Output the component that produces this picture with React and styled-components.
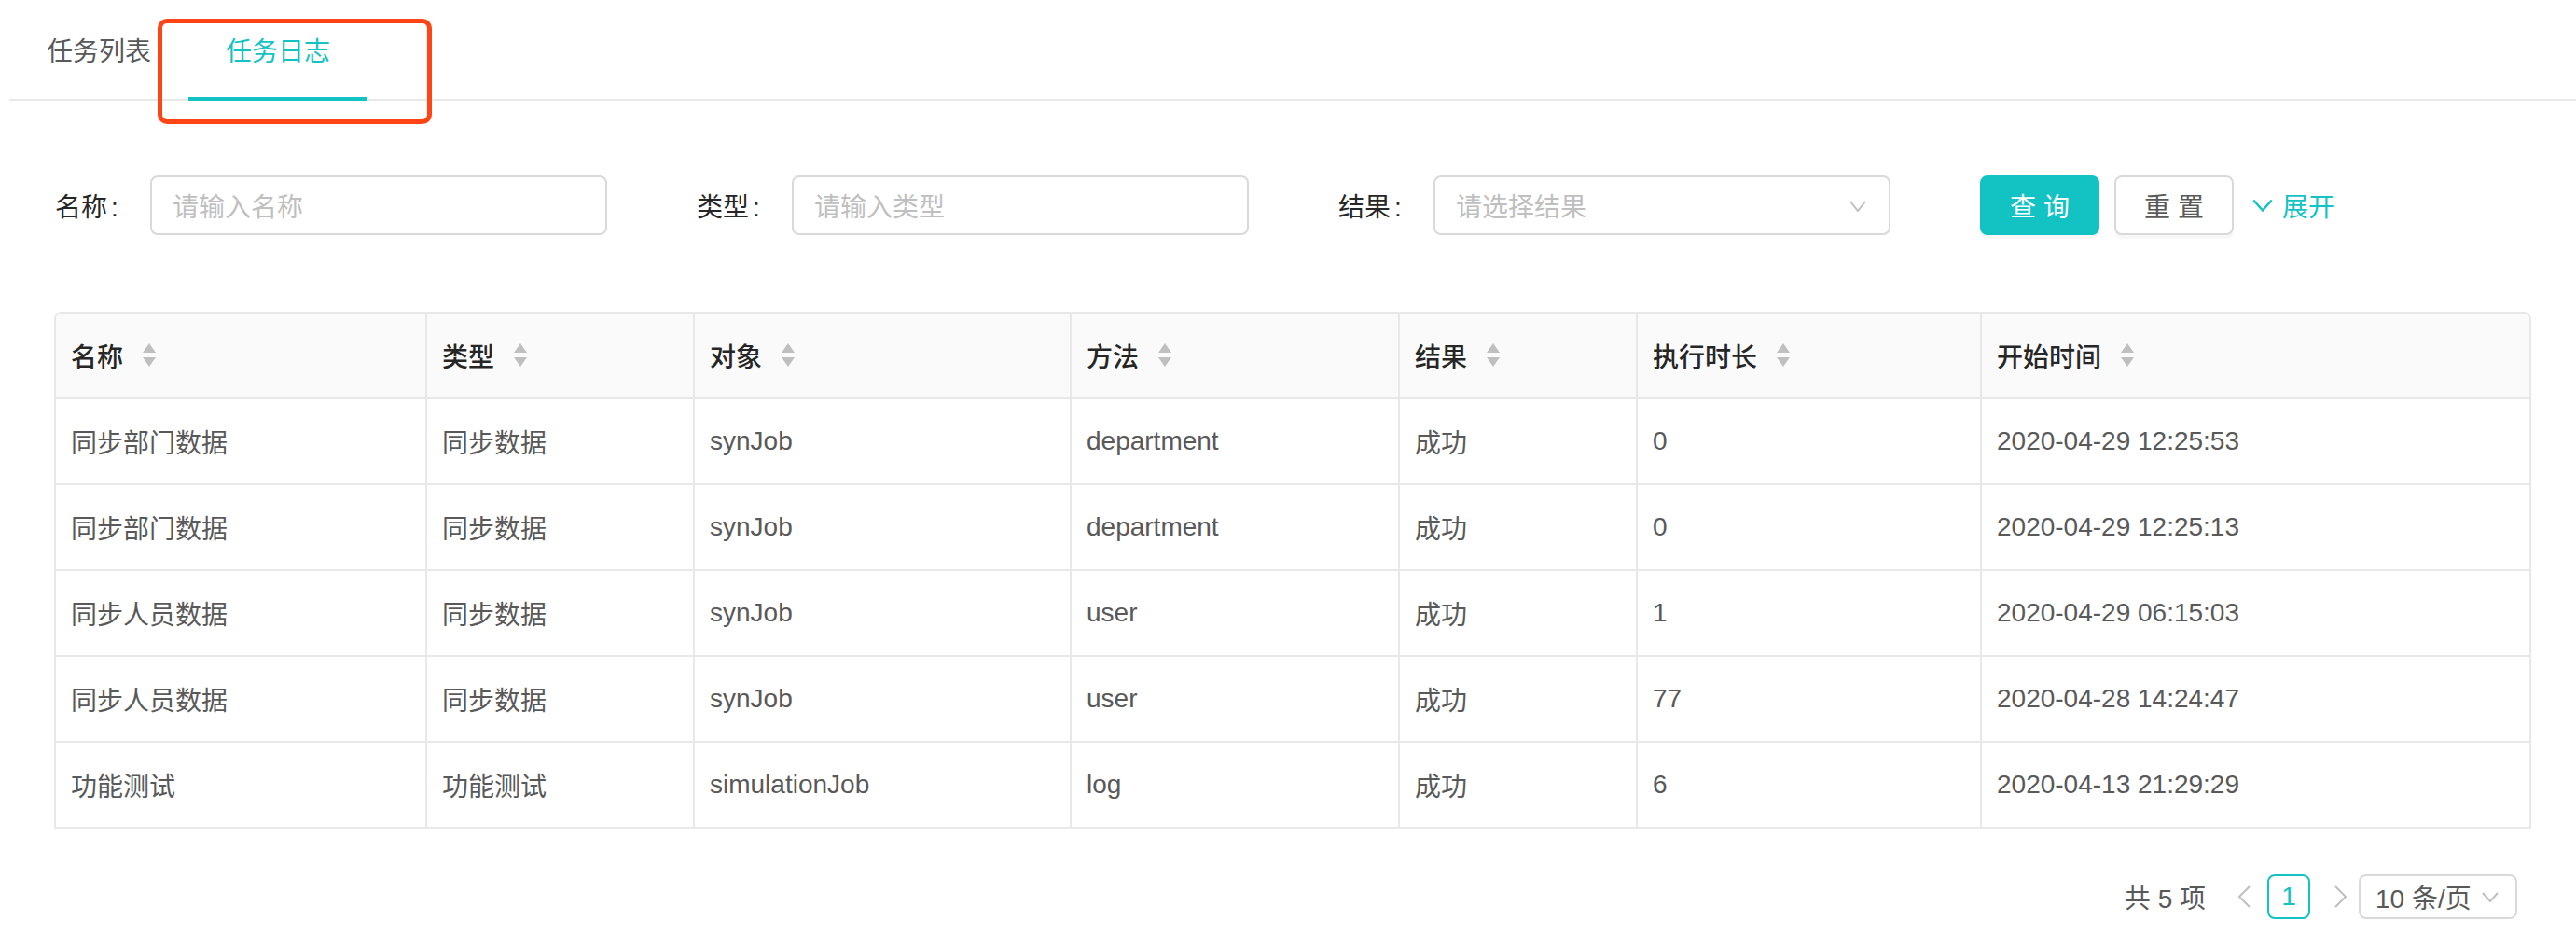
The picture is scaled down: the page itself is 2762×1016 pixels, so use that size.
import React from 'react'
import styled, { createGlobalStyle } from 'styled-components'

const teal = '#13c2c2'
const line = '#e8e8e8'

const GlobalStyle = createGlobalStyle`
  html, body {
    margin: 0;
    padding: 0;
    background: #fff;
  }
  body {
    font-family: 'Liberation Sans', 'Noto Sans CJK SC', sans-serif;
    font-size: 28px;
    color: #595959;
  }
`

const Page = styled.div`
  position: relative;
  width: 2762px;
  min-height: 1016px;
`

// annotation drawn over the active tab
const Highlight = styled.div`
  position: absolute;
  left: 169px;
  top: 20px;
  width: 294px;
  height: 113px;
  box-sizing: border-box;
  border: 5px solid #ff4516;
  border-radius: 10px;
  pointer-events: none;
`

const TabNav = styled.div`
  display: flex;
  margin-left: 10px;
  border-bottom: 2px solid ${line};
`

const Tab = styled.div`
  padding: 35px 40px 27px;
  line-height: 42px;
  margin-bottom: -2px;
  border-bottom: 4px solid ${props => (props.active ? teal : 'transparent')};
  color: ${props => (props.active ? teal : '#595959')};
  cursor: pointer;
`

const Body = styled.div`
  padding: 0 48px 0 58px;
`

const FilterRow = styled.div`
  display: flex;
  align-items: center;
  margin-top: 80px;
  padding-left: 1px;
`

const FilterItem = styled.div`
  display: flex;
  align-items: center;
  width: 688px;
  flex: none;
`

const Label = styled.label`
  width: 102px;
  flex: none;
  color: #262626;
  white-space: nowrap;
`

const Colon = styled.span`
  margin: 0 4px;
`

const Field = styled.div`
  position: relative;
  width: 490px;
  height: 64px;
  box-sizing: border-box;
  border: 2px solid #d9d9d9;
  border-radius: 8px;
  display: flex;
  align-items: center;
  padding: 0 22px;
  color: #bfbfbf;
`

const Caret = styled.svg`
  position: absolute;
  right: 24px;
  top: 25px;
`

const Button = styled.button`
  width: 128px;
  height: 64px;
  margin-right: 16px;
  border-radius: 8px;
  font: inherit;
  letter-spacing: 8px;
  text-indent: 8px;
  cursor: pointer;
  box-shadow: 0 4px 0 rgba(0, 0, 0, 0.03);
  border: 2px solid ${props => (props.primary ? teal : '#d9d9d9')};
  background: ${props => (props.primary ? teal : '#fff')};
  color: ${props => (props.primary ? '#fff' : '#595959')};
`

const Expand = styled.a`
  display: flex;
  align-items: center;
  gap: 10px;
  color: ${teal};
  margin-left: 4px;
`

const Table = styled.div`
  margin-top: 82px;
  border: 2px solid ${line};
  border-bottom: none;
  border-radius: 8px 8px 0 0;
  overflow: hidden;
`

const Row = styled.div`
  display: grid;
  grid-template-columns: 398px 287px 404px 352px 255px 369px 587px;
  background: ${props => (props.head ? '#fafafa' : '#fff')};
  border-bottom: 2px solid ${line};
`

const Cell = styled.div`
  display: flex;
  align-items: center;
  height: 90px;
  padding: 0 16px;
  border-right: 2px solid ${line};
  white-space: nowrap;
  color: ${props => (props.head ? '#262626' : '#595959')};
  font-weight: ${props => (props.head ? 500 : 400)};

  &:last-child {
    border-right: none;
  }
`

const SortIcon = styled.svg`
  margin-left: 20px;
  flex: none;
`

const Pagination = styled.div`
  display: flex;
  align-items: center;
  justify-content: flex-end;
  margin-top: 49px;
  margin-right: 15px;
`

const Total = styled.span`
  color: #595959;
`

const Arrow = styled.svg`
  flex: none;
  margin-left: ${props => props.gap}px;
`

const PageItem = styled.div`
  width: 46px;
  height: 48px;
  box-sizing: border-box;
  margin-left: 18px;
  border: 2px solid ${teal};
  border-radius: 8px;
  color: ${teal};
  display: flex;
  align-items: center;
  justify-content: center;
`

const SizeSelect = styled.div`
  width: 170px;
  height: 48px;
  box-sizing: border-box;
  margin-left: 12px;
  border: 2px solid #d9d9d9;
  border-radius: 8px;
  display: flex;
  align-items: center;
  justify-content: space-between;
  padding: 0 18px 0 16px;
  color: #595959;
`

const columns = ['名称', '类型', '对象', '方法', '结果', '执行时长', '开始时间']

const rows = [
  ['同步部门数据', '同步数据', 'synJob', 'department', '成功', '0', '2020-04-29 12:25:53'],
  ['同步部门数据', '同步数据', 'synJob', 'department', '成功', '0', '2020-04-29 12:25:13'],
  ['同步人员数据', '同步数据', 'synJob', 'user', '成功', '1', '2020-04-29 06:15:03'],
  ['同步人员数据', '同步数据', 'synJob', 'user', '成功', '77', '2020-04-28 14:24:47'],
  ['功能测试', '功能测试', 'simulationJob', 'log', '成功', '6', '2020-04-13 21:29:29'],
]

const Sorter = () => (
  <SortIcon width="16" height="26" viewBox="0 0 16 26">
    <path d="M8 0 L15 10 L1 10 Z" fill="#bfbfbf" />
    <path d="M1 15 L15 15 L8 25 Z" fill="#bfbfbf" />
  </SortIcon>
)

const Chevron = ({ color = '#bfbfbf', width = 18, height = 11 }) => (
  <svg width={width} height={height} viewBox="0 0 18 11" fill="none">
    <path d="M1 1 L9 10 L17 1" stroke={color} strokeWidth="2" />
  </svg>
)

const Filter = ({ label, placeholder, select }) => (
  <FilterItem>
    <Label>
      {label}
      <Colon>:</Colon>
    </Label>
    <Field>
      {placeholder}
      {select && (
        <Caret width="18" height="12" viewBox="0 0 18 12" fill="none">
          <path d="M1 1 L9 11 L17 1" stroke="#bfbfbf" strokeWidth="2" />
        </Caret>
      )}
    </Field>
  </FilterItem>
)

export default function App() {
  return (
    <Page>
      <GlobalStyle />
      <TabNav>
        <Tab>任务列表</Tab>
        <Tab active>任务日志</Tab>
      </TabNav>
      <Highlight />

      <Body>
        <FilterRow>
          <Filter label="名称" placeholder="请输入名称" />
          <Filter label="类型" placeholder="请输入类型" />
          <Filter label="结果" placeholder="请选择结果" select />
          <Button primary>查询</Button>
          <Button>重置</Button>
          <Expand>
            <Chevron color={teal} width={22} height={14} />
            展开
          </Expand>
        </FilterRow>

        <Table>
          <Row head>
            {columns.map(c => (
              <Cell head key={c}>
                {c}
                <Sorter />
              </Cell>
            ))}
          </Row>
          {rows.map((r, i) => (
            <Row key={i}>
              {r.map((v, j) => (
                <Cell key={j}>{v}</Cell>
              ))}
            </Row>
          ))}
        </Table>

        <Pagination>
          <Total>共 5 项</Total>
          <Arrow gap={34} width="14" height="24" viewBox="0 0 14 24" fill="none">
            <path d="M13 1 L2 12 L13 23" stroke="#bfbfbf" strokeWidth="2" />
          </Arrow>
          <PageItem>1</PageItem>
          <Arrow gap={26} width="14" height="24" viewBox="0 0 14 24" fill="none">
            <path d="M1 1 L12 12 L1 23" stroke="#bfbfbf" strokeWidth="2" />
          </Arrow>
          <SizeSelect>
            10 条/页
            <Chevron />
          </SizeSelect>
        </Pagination>
      </Body>
    </Page>
  )
}
